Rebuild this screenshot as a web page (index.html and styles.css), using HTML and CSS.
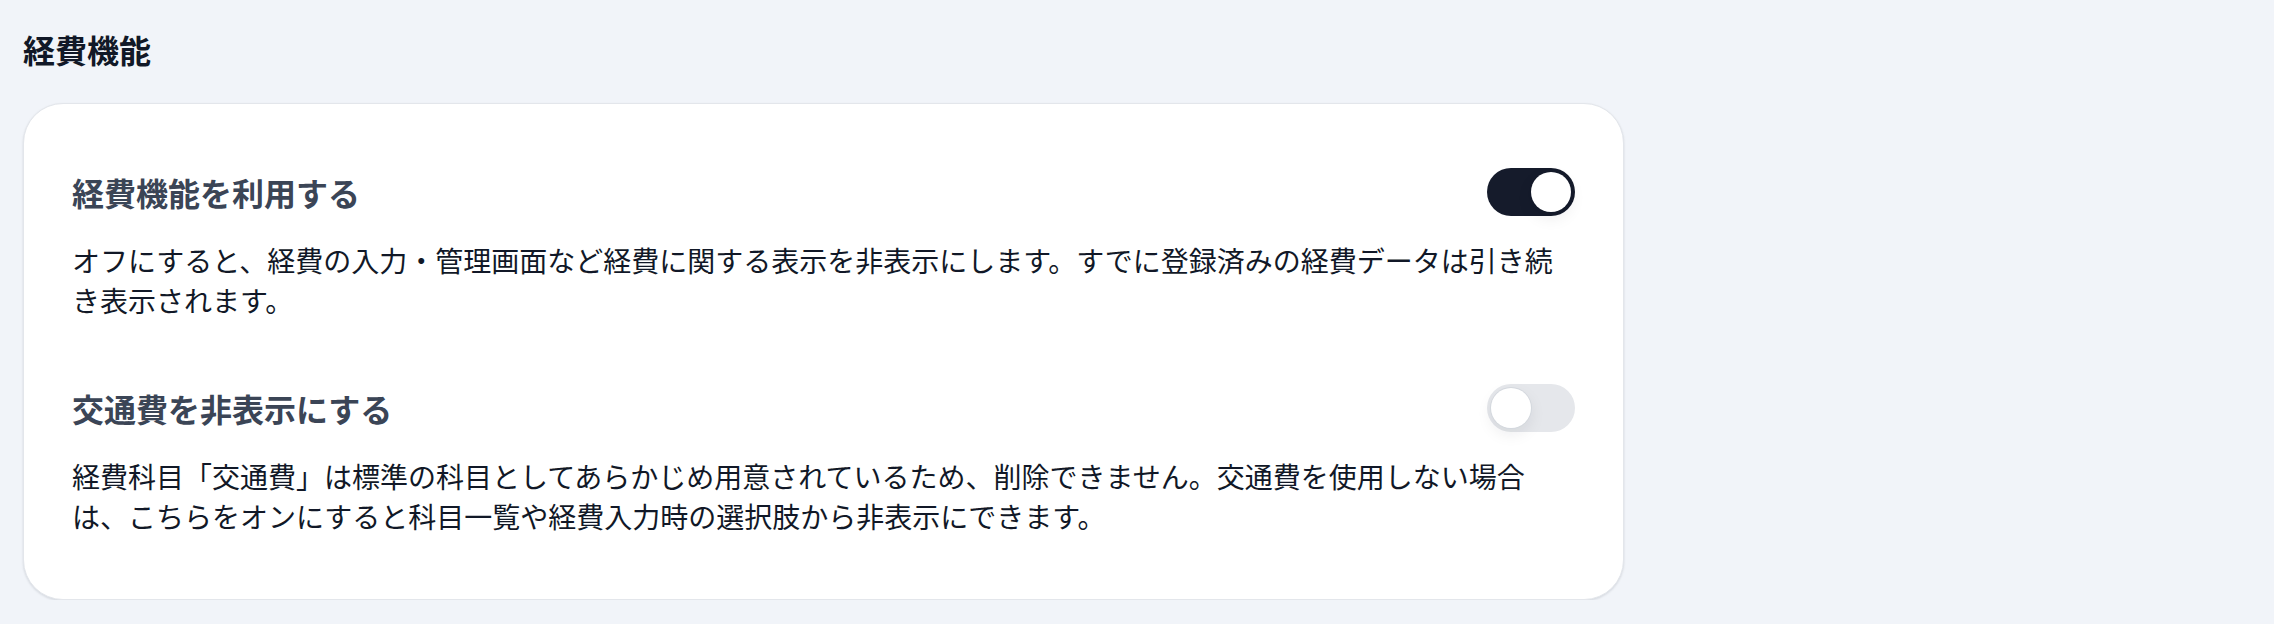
FILE: index.html
```html
<!DOCTYPE html>
<html lang="ja">
<head>
<meta charset="utf-8">
<title>経費機能</title>
<link rel="stylesheet" href="styles.css">
</head>
<body>
<main class="page">
  <h2 class="section-title">経費機能</h2>
  <section class="card">
    <div class="setting">
      <div class="setting-row">
        <h3 class="setting-title">経費機能を利用する</h3>
        <button class="toggle toggle-on" type="button" role="switch" aria-checked="true"><span class="knob"></span></button>
      </div>
      <p class="setting-desc">オフにすると、経費の入力・管理画面など経費に関する表示を非表示にします。すでに登録済みの経費データは引き続き表示されます。</p>
    </div>
    <div class="setting">
      <div class="setting-row">
        <h3 class="setting-title">交通費を非表示にする</h3>
        <button class="toggle toggle-off" type="button" role="switch" aria-checked="false"><span class="knob"></span></button>
      </div>
      <p class="setting-desc">経費科目「交通費」は標準の科目としてあらかじめ用意されているため、削除できません。交通費を使用しない場合は、こちらをオンにすると科目一覧や経費入力時の選択肢から非表示にできます。</p>
    </div>
  </section>
</main>
</body>
</html>
```

FILE: styles.css
```css
* { box-sizing: border-box; }

html, body {
  margin: 0;
  padding: 0;
  background: #f1f4f9;
  font-family: "Noto Sans CJK JP", "Noto Sans", sans-serif;
  color: #111827;
}

.page {
  padding: 25px 0 0 23px;
  width: 1624px;
}

.section-title {
  margin: 0 0 30px 0;
  font-size: 32px;
  line-height: 48px;
  font-weight: 700;
  color: #111827;
}

.card {
  background: #ffffff;
  border: 1px solid #e3e6eb;
  border-radius: 40px;
  box-shadow: 0 1px 3px rgba(15, 23, 42, 0.08), 0 1px 2px rgba(15, 23, 42, 0.05);
  padding: 64px 48px 63px 48px;
  display: flex;
  flex-direction: column;
  gap: 64px;
}

.setting {
  display: flex;
  flex-direction: column;
  gap: 24px;
}

.setting-row {
  display: flex;
  align-items: center;
  justify-content: space-between;
  height: 48px;
}

.setting-title {
  margin: 0;
  font-size: 32px;
  line-height: 48px;
  font-weight: 600;
  color: #3b4556;
}

.setting-desc {
  margin: 0;
  font-size: 28px;
  line-height: 40px;
  color: #111827;
  line-break: strict;
}

.toggle {
  flex: none;
  width: 88px;
  height: 48px;
  border: none;
  border-radius: 24px;
  padding: 4px;
  display: flex;
  align-items: center;
  cursor: pointer;
}

.toggle-on {
  background: #151b2b;
  justify-content: flex-end;
}

.toggle-off {
  background: #e5e7eb;
  justify-content: flex-start;
}

.knob {
  width: 40px;
  height: 40px;
  border-radius: 50%;
  background: #ffffff;
  box-shadow: 0 6px 16px rgba(15, 23, 42, 0.08), 0 2px 4px rgba(15, 23, 42, 0.04);
}

.toggle-off .knob {
  box-shadow: 0 0 0 1px #d4d8de, 0 6px 16px rgba(15, 23, 42, 0.08);
}
```
